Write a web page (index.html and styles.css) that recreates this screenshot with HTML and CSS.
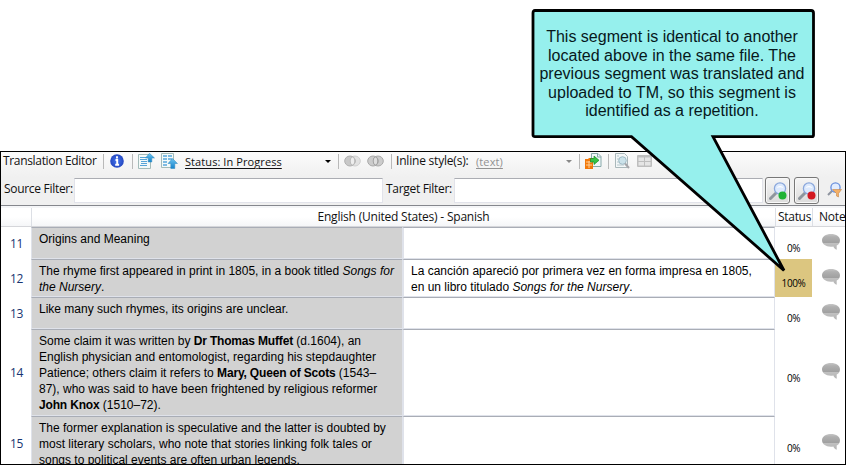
FILE: index.html
```html
<!DOCTYPE html>
<html lang="en">
<head>
<meta charset="utf-8">
<title>Translation Editor</title>
<link rel="stylesheet" href="styles.css">
</head>
<body>
<svg class="defs" width="0" height="0">
  <defs>
    <linearGradient id="gray" x1="0" y1="0" x2="0" y2="1"><stop offset="0" stop-color="#c6c6c6"/><stop offset=".18" stop-color="#b0b0b0"/><stop offset=".55" stop-color="#a0a0a0"/><stop offset=".6" stop-color="#c0c0c0"/><stop offset="1" stop-color="#b4b4b4"/></linearGradient>
    <linearGradient id="blue" x1="0" y1="0" x2="0" y2="1"><stop offset="0" stop-color="#6dc3ee"/><stop offset="1" stop-color="#1583cc"/></linearGradient>
    <radialGradient id="info"><stop offset="0" stop-color="#4777ee"/><stop offset="1" stop-color="#2447c0"/></radialGradient>
    <symbol id="bubble" viewBox="0 0 20 18"><path d="M10 1c5.300 0 9 2.700 9 6.300 0 2.400-1.300 4.300-3.300 5.300v4.200c-1.600-.5-2.700-1.600-3.300-3.300-6.800 1-11.400-2-11.400-6.200C1 3.700 4.700 1 10 1z" fill="url(#gray)"/></symbol>
    <symbol id="lens" viewBox="0 0 18 18"><path d="M1.500 16.500l6-6" stroke="#8e959c" stroke-width="3" stroke-linecap="round"/><circle cx="11" cy="6.500" r="5.600" fill="#dce9fd" stroke="#8ba8dc" stroke-width="1.300"/><path d="M7.500 6a4 4 0 0 1 7 0c-2-1-5-1-7 0z" fill="#fff"/></symbol>
  </defs>
</svg>
<main class="editor">
  <div class="toolbar">
    <span class="title">Translation Editor</span>
    <i class="sep sep-a"></i>
    <svg class="ic-info" width="14" height="14" viewBox="0 0 14 14"><circle cx="7" cy="7" r="6.800" fill="url(#info)"/><path d="M7 2.300v2.200M5.500 6H7.200v4.500M5.200 10.700h3.900" stroke="#fff" stroke-width="1.900" fill="none"/></svg>
    <i class="sep sep-b"></i>
    <svg class="ic-up" width="17" height="17" viewBox="0 0 17 17"><path d="M.5 1.500h12v14H.5z" fill="#f4faf9" stroke="#a3bbb9"/><path d="M2 4.500h7M2 6.500h7M3 8.500h6M3 10.500h6M2 12.500h7" stroke="#58a5d8"/><path d="M11.500.3l5 4.700h-2.700V9h-3.600V5H7.500z" fill="url(#blue)" stroke="#3189bd" stroke-width=".5"/></svg>
    <svg class="ic-up2" width="17" height="17" viewBox="0 0 17 17"><path d="M.5.5h12v14H.5z" fill="#f4faf9" stroke="#a3bbb9"/><path d="M2 3h4M7 3h4M2 6h4M7 6h4M2 9h4M2 12h4" stroke="#57a7dc" stroke-width="1.600"/><path d="M11.500 5.500l5 5h-2.700v5h-4v-5H7z" fill="url(#blue)" stroke="#3189bd" stroke-width=".5"/></svg>
    <span class="status-link">Status: In Progress</span>
    <i class="caret"></i>
    <i class="sep sep-c"></i>
    <svg class="ic-ring" width="17" height="12" viewBox="0 0 17 12"><ellipse cx="11" cy="6" rx="5.300" ry="5" fill="#e2e2e2" stroke="#d0d0d0"/><ellipse cx="6" cy="6" rx="5.300" ry="5" fill="#c8c8c8" stroke="#b0b0b0"/><ellipse cx="8.500" cy="6" rx="2.300" ry="4" fill="#eee" stroke="#bbb"/></svg>
    <svg class="ic-ring2" width="17" height="12" viewBox="0 0 17 12"><ellipse cx="11" cy="6" rx="5.300" ry="5" fill="#ccc" stroke="#aaa"/><ellipse cx="6" cy="6" rx="5.300" ry="5" fill="#ccc" stroke="#aaa"/><ellipse cx="8.500" cy="6" rx="2.300" ry="4" fill="#dedede" stroke="#a2a2a2"/></svg>
    <i class="sep sep-d"></i>
    <span class="inline-label">Inline style(s):</span>
    <span class="inline-text">(text)</span>
    <i class="caret caret-gray"></i>
    <i class="sep sep-e"></i>
    <svg class="ic-convert" width="17" height="16" viewBox="0 0 17 16"><path d="M6.500.5h6.500l3 3v10H6.500z" fill="#f1f8fa" stroke="#88a9aa"/><path d="M12.500.5v3.500h3.500" fill="none" stroke="#88a9aa"/><path d="M0 6h3l1-1h4v11H0z" fill="#f2790b"/><path d="M1 9h6M1 12h6M4 8v7" stroke="#ffd098"/><path d="M5.500 5.500H9V3l5 4.300L9 11.500V9H5.500z" fill="#37c346" stroke="#158922" stroke-width=".7"/></svg>
    <i class="sep sep-f"></i>
    <svg class="ic-preview" width="15" height="16" viewBox="0 0 15 16"><path d="M.5.5h9l3 3v11H.5z" fill="#f3f7f8" stroke="#aab8bb"/><path d="M2 3h2M2 6h2M2 9h2M2 12h7" stroke="#b6c7cc"/><circle cx="7.500" cy="7.500" r="3.800" fill="#cbe2ea" stroke="#9fbac5"/><path d="M10 10.500l4 4.500" stroke="#a6a6aa" stroke-width="2"/></svg>
    <svg class="ic-table" width="15" height="12" viewBox="0 0 15 12"><rect width="15" height="12" rx="1" fill="#bebebe"/><path d="M1.500 2.500H7V6H1.500zM8 2.500h5.500V6H8zM1.500 7H7v3.500H1.500zM8 7h5.500v3.500H8z" fill="#e5e5e5"/></svg>
  </div>
  <div class="filters">
    <span class="source-label">Source Filter:</span><div class="field field-source"></div>
    <span class="target-label">Target Filter:</span><div class="field field-target"></div>
    <div class="btn btn-green"><svg width="18" height="18"><use href="#lens"/><circle cx="13.500" cy="13.500" r="4" fill="#20b336"/></svg></div>
    <div class="btn btn-red"><svg width="18" height="18"><use href="#lens"/><circle cx="13.500" cy="13.500" r="4" fill="#d31820"/></svg></div>
    <svg class="ic-funnel" width="15" height="16" viewBox="0 0 15 16"><path d="M1 13l5-5" stroke="#8e949f" stroke-width="2"/><circle cx="8.500" cy="5.500" r="4.600" fill="#e2edff" stroke="#668ddc" stroke-width="1.300"/><path d="M5.500 7.500h9l-3 4V15l-2-1v-2.500z" fill="#f4b067" stroke="#c6864a" stroke-width=".6"/></svg>
  </div>
  <div class="grid">
    <div class="row head"><div class="num"></div><div class="lang">English (United States) - Spanish</div><div class="head-status">Status</div><div class="head-note">Note</div></div>
    <div class="row r11"><div class="num">11</div><div class="src">Origins and Meaning</div><div class="tgt"></div><div class="pct">0%</div><div class="note"><svg width="20" height="18"><use href="#bubble"/></svg></div></div>
    <div class="row r12"><div class="num">12</div><div class="src">The rhyme first appeared in print in 1805, in a book titled <em>Songs for<br>the Nursery</em>.</div><div class="tgt">La canción apareció por primera vez en forma impresa en 1805,<br>en un libro titulado <em>Songs for the Nursery</em>.</div><div class="pct full">100%</div><div class="note"><svg width="20" height="18"><use href="#bubble"/></svg></div></div>
    <div class="row r13"><div class="num">13</div><div class="src">Like many such rhymes, its origins are unclear.</div><div class="tgt"></div><div class="pct">0%</div><div class="note"><svg width="20" height="18"><use href="#bubble"/></svg></div></div>
    <div class="row r14"><div class="num">14</div><div class="src">Some claim it was written by <b>Dr Thomas Muffet</b> (d.1604), an<br>English physician and entomologist, regarding his stepdaughter<br>Patience; others claim it refers to <b>Mary, Queen of Scots</b> (1543–<br>87), who was said to have been frightened by religious reformer<br><b>John Knox</b> (1510–72).</div><div class="tgt"></div><div class="pct">0%</div><div class="note"><svg width="20" height="18"><use href="#bubble"/></svg></div></div>
    <div class="row r15"><div class="num">15</div><div class="src">The former explanation is speculative and the latter is doubted by<br>most literary scholars, who note that stories linking folk tales or<br>songs to political events are often urban legends.</div><div class="tgt"></div><div class="pct">0%</div><div class="note"><svg width="20" height="18"><use href="#bubble"/></svg></div></div>
  </div>
</main>
<aside class="callout">
  <svg class="callout-shape" width="290" height="270" viewBox="0 0 290 270"><path d="M5 2.500H281Q283.500 2.500 283.500 5V127Q283.500 128.700 282 128.700H183L254 262.500L101.500 128.700H5Q3 128.700 3 127V5Q3 2.500 5 2.500z" fill="#96f0ed" stroke="#000" stroke-width="2.800"/></svg>
  <p>This segment is identical to another<br>located above in the same file. The<br>previous segment was translated and<br>uploaded to TM, so this segment is<br>identified as a repetition.</p>
</aside>
</body>
</html>
```

FILE: styles.css
```css
* { box-sizing: border-box; }
body { margin: 0; width: 846px; height: 465px; overflow: hidden; background: #fff; font-family: "Open Sans", "Noto Sans", sans-serif; font-size: 12px; color: #111; padding-top: 151px; }
svg { display: block; flex: none; }
.defs { position: absolute; }
.editor { width: 846px; height: 314px; border: 1px solid #000; background: #f0f0f0; overflow: hidden; }
.toolbar { height: 25px; display: flex; align-items: flex-start; background: linear-gradient(#fbfbfb, #f0f0f0); white-space: nowrap; }
.toolbar > * { flex: none; }
.toolbar span { line-height: 18px; }
.title { width: 100px; padding-left: 2px; letter-spacing: -.33px; }
.sep { width: 1px; height: 15px; margin-top: 2px; background: #b9b9b9; }
.sep-a { margin-left: 2px; }
.ic-info { margin: 2px 0 0 6px; }
.sep-b { margin-left: 8px; }
.ic-up { margin: 1px 0 0 5px; }
.ic-up2 { margin: 1px 0 0 6px; }
.status-link { width: 98px; margin: 1px 0 0 7px; font-size: 11px; letter-spacing: .08px; text-decoration: underline; text-underline-offset: 2px; }
.caret { border: 3px solid transparent; border-top-color: #000; border-bottom: 0; margin: 8px 0 0 42px; }
.caret-gray { border-top-color: #888; margin-left: 62px; }
.sep-c { margin-left: 7px; }
.ic-ring { margin: 3px 0 0 5px; }
.ic-ring2 { margin: 3px 0 0 6px; }
.sep-d { margin-left: 7px; }
.inline-label { width: 75px; margin-left: 4px; letter-spacing: -.2px; }
.inline-text { width: 28px; margin: 1px 0 0 5px; color: #929292; font-size: 11px; letter-spacing: .1px; text-decoration: underline; text-underline-offset: 2px; }
.sep-e { margin-left: 7px; }
.ic-convert { margin: 1px 0 0 5px; }
.sep-f { margin-left: 6px; }
.ic-preview { margin: 1px 0 0 6px; }
.ic-table { margin: 3px 0 0 7px; }
.filters { height: 29px; display: flex; padding-left: 3px; border-bottom: 1px solid #85878d; white-space: nowrap; }
.filters > * { flex: none; }
.filters span { line-height: 24px; letter-spacing: -.3px; }
.source-label { width: 70px; }
.target-label { width: 68px; margin-left: 3px; }
.field { height: 25px; margin-top: 1px; background: #fff; border: 1px solid #e2e3ea; border-top-color: #abadb3; }
.field-source { width: 309px; }
.field-target { width: 309px; }
.btn { width: 25px; height: 27px; border: 1px solid #777; border-radius: 3px; background: linear-gradient(#f5f5f5, #dcdcdc); box-shadow: inset 0 0 0 1px #f8f8f8; display: flex; padding: 4px 3px; }
.btn-green { margin-left: 2px; }
.btn-red { margin-left: 4px; }
.ic-funnel { margin: 5px 0 0 8px; }
.grid { background: #fff; border-top: 2px solid #f5f6f8; height: 260px; }
.row { display: grid; grid-template-columns: 30px 371px 373px 37px 33px; }
.head { height: 19px; background: linear-gradient(#fff 50%, #f5f6f8); border-bottom: 1px solid #d5d6da; grid-template-columns: 30px 744px 37px 33px; line-height: 18px; }
.head > div { border-left: 1px solid #dcdfe5; }
.head > .num { border-left: 0; }
.num { display: flex; align-items: center; padding-left: 9px; color: #173571; letter-spacing: -.3px; }
.lang { text-align: center; letter-spacing: -.21px; }
.head-status { padding-left: 2px; letter-spacing: -.3px; }
.head .head-note { padding-left: 6px; letter-spacing: -.2px; }
.src, .tgt { font: 12px/16px "Liberation Sans", Arial, sans-serif; color: #000; border-top: 1px solid #a9adb6; border-bottom: 1px solid #dfe2ea; padding: 3px 0 0 7px; white-space: nowrap; }
.src { background: #d2d2d2; border-left: 1px solid #dfe2ea; }
.src b { letter-spacing: -.17px; }
.tgt { border-left: 2px solid #dfe2ea; padding-left: 7px; border-right: 1px solid #dfe2ea; }
.r11 { height: 32px; }
.r12 { height: 38px; }
.r13 { height: 32px; }
.r14 { height: 87px; }
.r15 { height: 54px; }
.pct { font-size: 10px; letter-spacing: -.4px; display: flex; align-items: center; justify-content: center; padding-top: 10px; color: #000; }
.full { background: #dcc680; }
.note { display: flex; align-items: center; padding: 0 0 3px 9px; }
.callout { position: absolute; left: 530px; top: 8px; width: 290px; height: 270px; }
.callout-shape { position: absolute; left: 0; top: 0; }
.callout p { position: relative; margin: 0; padding-top: 20px; width: 284px; text-align: center; font: 16px/18.5px "Liberation Sans", Arial, sans-serif; color: #07181c; white-space: nowrap; }
```
